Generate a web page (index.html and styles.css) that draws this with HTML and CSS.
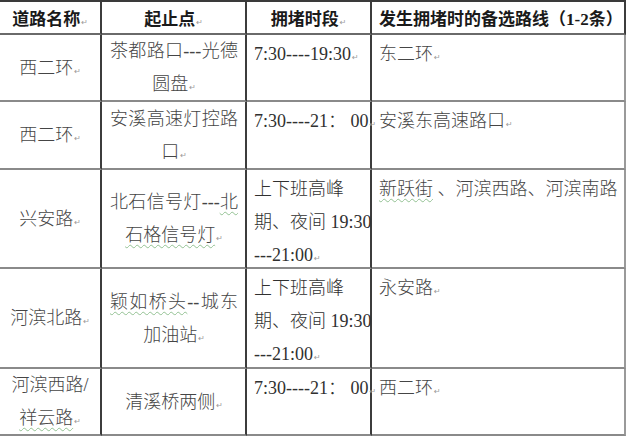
FILE: index.html
```html
<!DOCTYPE html>
<html lang="zh-CN">
<head>
<meta charset="utf-8">
<title>拥堵路段备选路线</title>
<link rel="stylesheet" href="styles.css">
</head>
<body>
<div class="sheet">
  <div class="cell head mid">道路名称<span class="pm">↵</span></div>
  <div class="cell head mid">起止点<span class="pm">↵</span></div>
  <div class="cell head mid">拥堵时段<span class="pm">↵</span></div>
  <div class="cell head left">发生拥堵时的备选路线（1-2条）</div>

  <div class="cell name"><span class="nl">西二环<span class="pm">↵</span></span></div>
  <div class="cell span"><span class="jl">茶都路口---光德</span><span class="ll">圆盘<span class="pm">↵</span></span></div>
  <div class="cell time">7:30----19:30<span class="pm">↵</span></div>
  <div class="cell alt">东二环<span class="pm">↵</span></div>

  <div class="cell name"><span class="nl">西二环<span class="pm">↵</span></span></div>
  <div class="cell span"><span class="jl">安溪高速灯控路</span><span class="ll">口<span class="pm">↵</span></span></div>
  <div class="cell time">7:30----21：&nbsp;00<span class="pm">↵</span></div>
  <div class="cell alt">安溪东高速路口<span class="pm">↵</span></div>

  <div class="cell name"><span class="nl">兴安路<span class="pm">↵</span></span></div>
  <div class="cell span"><span class="jl">北石信号灯---<span class="wavy">北</span></span><span class="ll"><span class="wavy">石格信号灯</span><span class="pm">↵</span></span></div>
  <div class="cell time">上下班高峰<br>期、夜间 19:30<br>---21:00<span class="pm">↵</span></div>
  <div class="cell alt"><span class="wavy">新跃街</span> 、河滨西路、河滨南路</div>

  <div class="cell name"><span class="nl">河滨北路<span class="pm">↵</span></span></div>
  <div class="cell span"><span class="jl"><span class="wavy">颖如桥头</span>--城东</span><span class="ll">加油站<span class="pm">↵</span></span></div>
  <div class="cell time">上下班高峰<br>期、夜间 19:30<br>---21:00<span class="pm">↵</span></div>
  <div class="cell alt">永安路<span class="pm">↵</span></div>

  <div class="cell name"><span class="nl">河滨西路/</span><span class="nl"><span class="wavy">祥云路</span><span class="pm">↵</span></span></div>
  <div class="cell span"><span class="ll">清溪桥两侧<span class="pm">↵</span></span></div>
  <div class="cell time">7:30----21：&nbsp;00<span class="pm">↵</span></div>
  <div class="cell alt">西二环<span class="pm">↵</span></div>
</div>
</body>
</html>
```

FILE: styles.css
```css
html, body {
  margin: 0;
  padding: 0;
  background: #ffffff;
}

body {
  font-family: "Liberation Serif", "Noto Sans CJK SC", serif;
  font-size: 18px;
  color: #454545;
}

.sheet {
  display: grid;
  grid-template-columns: 102px 145px 125px 254px;
  grid-template-rows: 33px 67px 68px 99px 100px 67px;
  width: 626px;
  border-top: 2px solid #3a3a3a;
  overflow: hidden;
}

.cell {
  box-sizing: border-box;
  border-right: 2px solid #3c3c3c;
  border-bottom: 2px solid #8a8a8a;
  line-height: 33px;
  font-weight: 300;
  min-width: 0;
  overflow: visible;
}

.head {
  font-size: 17px;
  font-weight: 700;
  color: #1a1a1a;
  line-height: 31px;
  padding-top: 2px;
  white-space: nowrap;
  border-bottom-color: #6a6a6a;
}

.head.mid {
  text-align: center;
}

.head.left {
  padding-left: 7px;
  padding-right: 0;
  text-align: left;
}

.name {
  display: flex;
  flex-direction: column;
  justify-content: center;
  align-items: center;
  text-align: center;
  white-space: nowrap;
  padding-top: 4px;
}

.nl {
  display: block;
}

.span {
  display: flex;
  flex-direction: column;
  justify-content: center;
  padding: 4px 7px 0 8px;
}

.jl {
  display: block;
  text-align: justify;
  text-align-last: justify;
  white-space: nowrap;
}

.ll {
  display: block;
  text-align: center;
  white-space: nowrap;
}

.time {
  padding: 3px 7px 0;
  white-space: nowrap;
  color: #303030;
}

.alt {
  padding: 3px 7px 0;
  white-space: nowrap;
  border-right: 2px solid #9a9a9a;
}

.pm {
  font-family: "DejaVu Sans", sans-serif;
  font-size: 8px;
  font-weight: 400;
  color: #9a9a9a;
  margin-left: 1px;
}

.wavy {
  text-decoration-line: underline;
  text-decoration-style: wavy;
  text-decoration-color: #93c193;
  text-decoration-thickness: 1px;
  text-underline-offset: 3px;
}
```
